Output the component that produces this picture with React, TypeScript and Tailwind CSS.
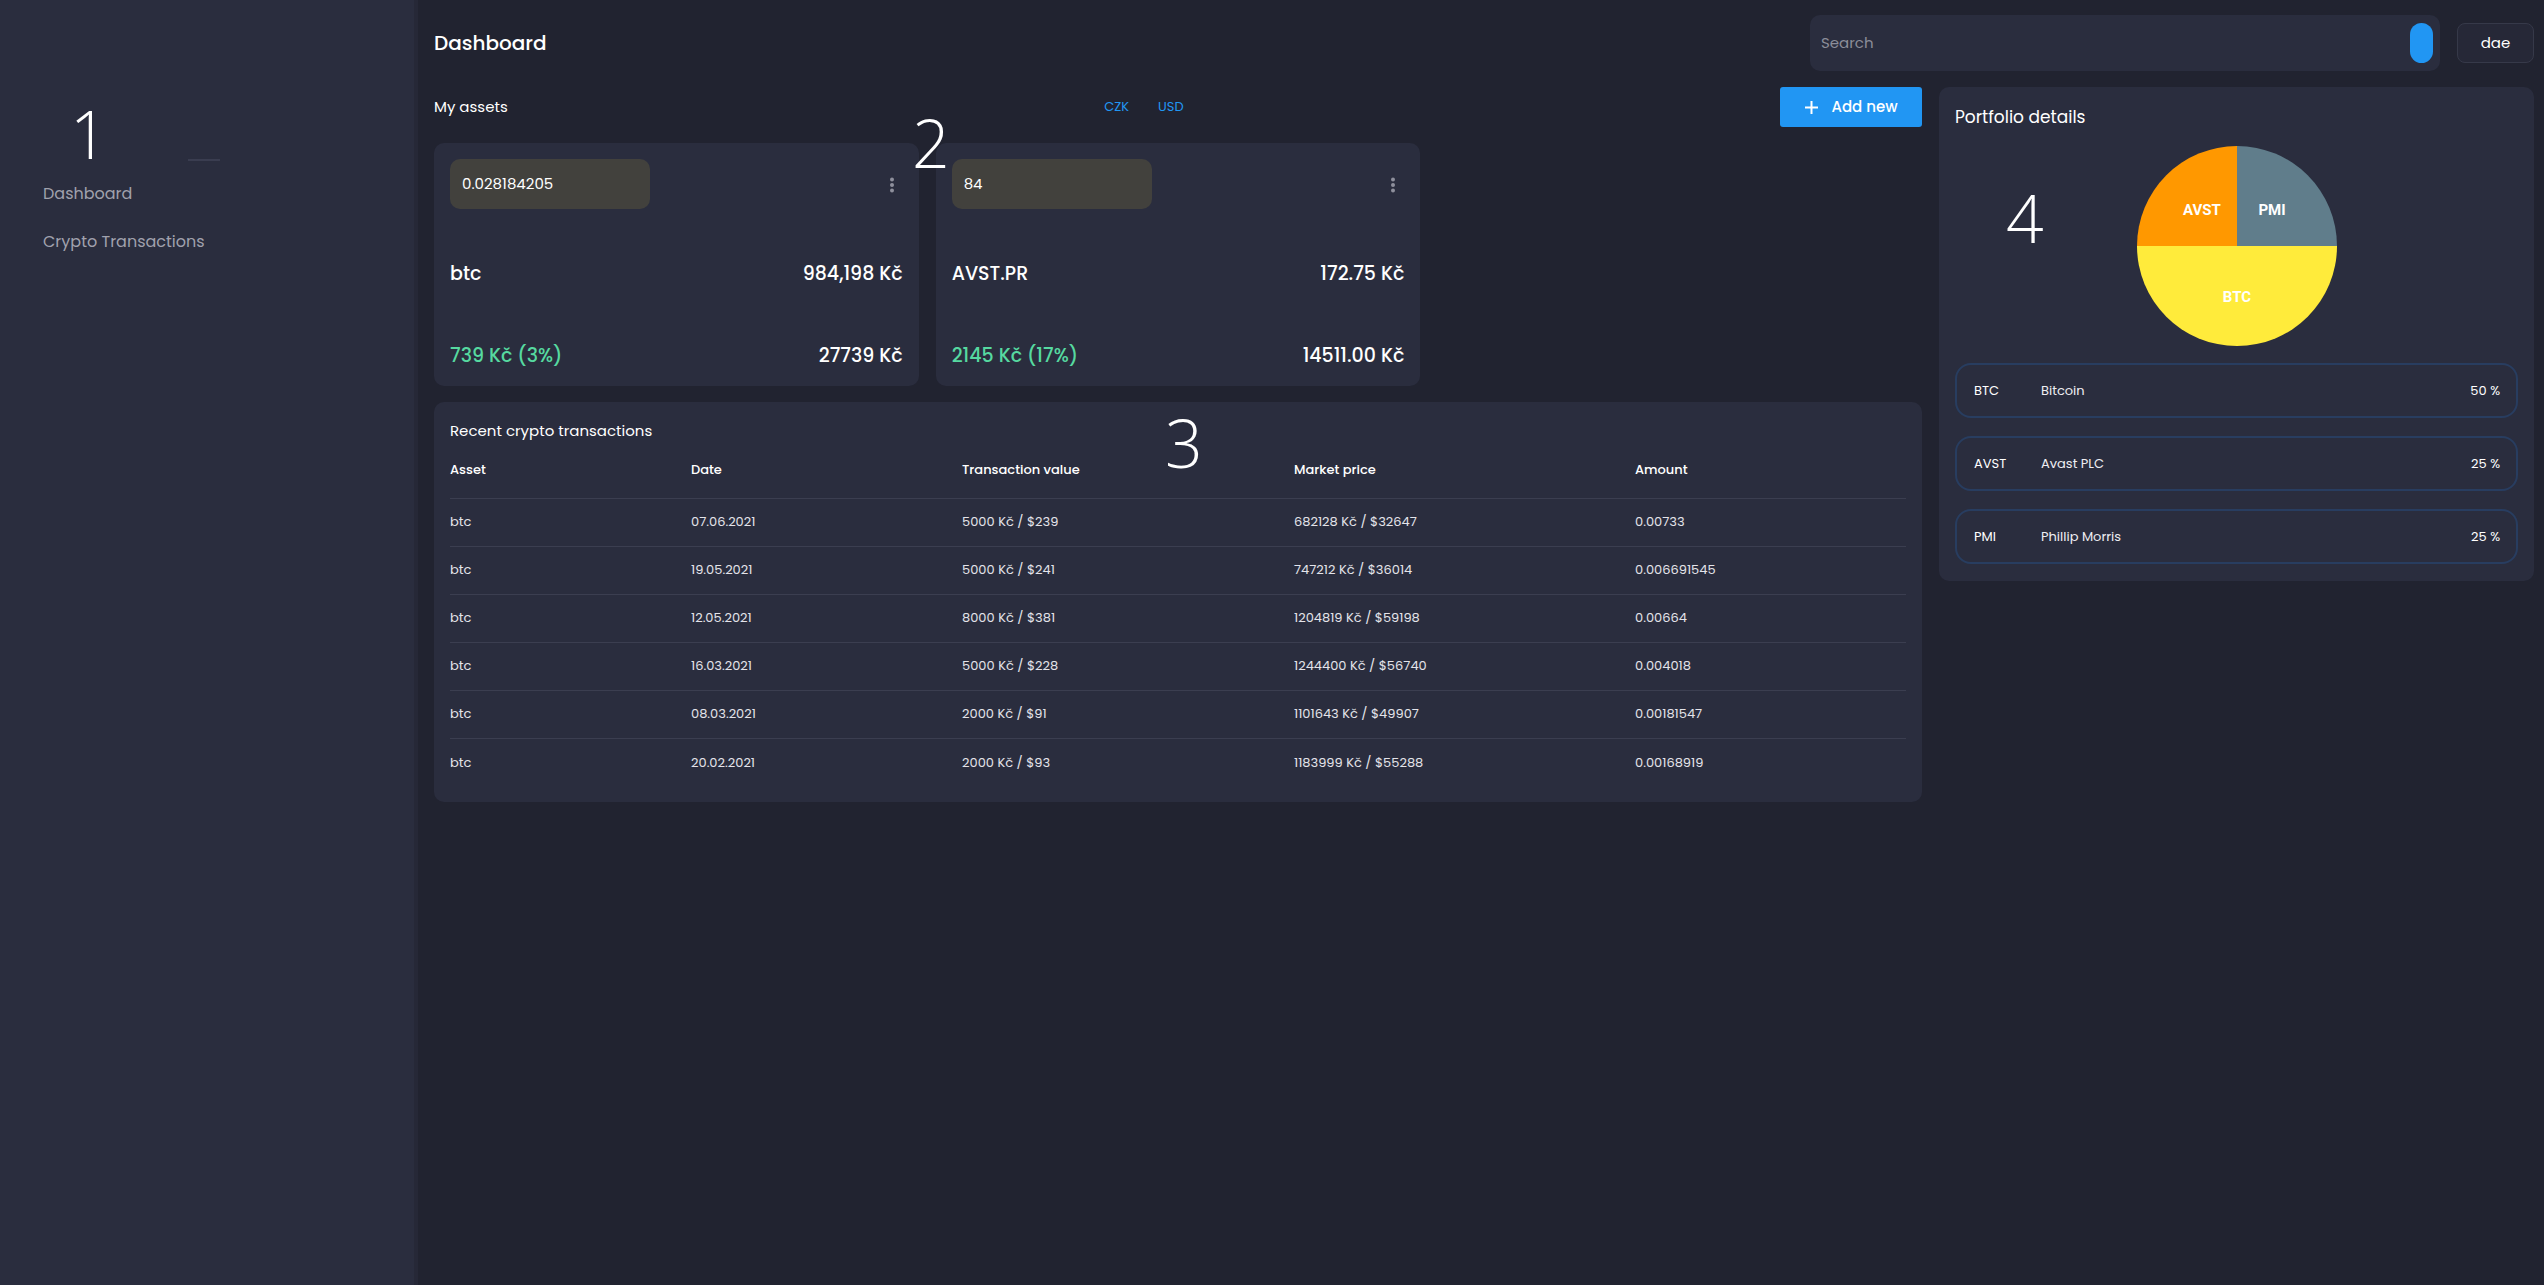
import React from "react";

const transactions = [
  { asset: "btc", date: "07.06.2021", value: "5000 Kč / $239", market: "682128 Kč / $32647", amount: "0.00733" },
  { asset: "btc", date: "19.05.2021", value: "5000 Kč / $241", market: "747212 Kč / $36014", amount: "0.006691545" },
  { asset: "btc", date: "12.05.2021", value: "8000 Kč / $381", market: "1204819 Kč / $59198", amount: "0.00664" },
  { asset: "btc", date: "16.03.2021", value: "5000 Kč / $228", market: "1244400 Kč / $56740", amount: "0.004018" },
  { asset: "btc", date: "08.03.2021", value: "2000 Kč / $91", market: "1101643 Kč / $49907", amount: "0.00181547" },
  { asset: "btc", date: "20.02.2021", value: "2000 Kč / $93", market: "1183999 Kč / $55288", amount: "0.00168919" },
];

const assets = [
  { amount: "0.028184205", name: "btc", price: "984,198 Kč", gain: "739 Kč (3%)", total: "27739 Kč" },
  { amount: "84", name: "AVST.PR", price: "172.75 Kč", gain: "2145 Kč (17%)", total: "14511.00 Kč" },
];

const holdings = [
  { ticker: "BTC", name: "Bitcoin", share: "50 %" },
  { ticker: "AVST", name: "Avast PLC", share: "25 %" },
  { ticker: "PMI", name: "Phillip Morris", share: "25 %" },
];

function Kebab() {
  return (
    <svg width="6" height="16" viewBox="0 0 6 16" className="mt-[18px] mr-[8px]">
      <circle cx="3" cy="2.5" r="2" fill="#8e8f9c" />
      <circle cx="3" cy="8" r="2" fill="#8e8f9c" />
      <circle cx="3" cy="13.5" r="2" fill="#8e8f9c" />
    </svg>
  );
}

function AssetCard({ a }: { a: (typeof assets)[number] }) {
  return (
    <div className="flex h-[243px] flex-col rounded-[10px] bg-[#2a2d3e] px-4 pt-4">
      <div className="flex items-start justify-between">
        <div className="flex h-[50px] w-[200px] items-center rounded-[10px] bg-[#42413d] pl-3 text-[15px] text-white">
          {a.amount}
        </div>
        <Kebab />
      </div>
      <div className="mt-[51px] flex items-center justify-between text-[19px] font-medium leading-[28px] text-white">
        <span>{a.name}</span>
        <span>{a.price}</span>
      </div>
      <div className="mt-[54px] flex items-center justify-between text-[19px] font-medium leading-[28px]">
        <span className="text-[#56d9a0]">{a.gain}</span>
        <span className="text-white">{a.total}</span>
      </div>
    </div>
  );
}

function Pie() {
  return (
    <svg width="200" height="200" viewBox="0 0 200 200" className="mx-auto block">
      <path d="M100,100 L0,100 A100,100 0 0 0 200,100 Z" fill="#ffeb3b" />
      <path d="M100,100 L0,100 A100,100 0 0 1 100,0 Z" fill="#ff9800" />
      <path d="M100,100 L100,0 A100,100 0 0 1 200,100 Z" fill="#607d8b" />
      <g fill="#ffffff" fontFamily="Roboto, sans-serif" fontWeight="700" fontSize="15" textAnchor="middle">
        <text x="65" y="69">AVST</text>
        <text x="135" y="69">PMI</text>
        <text x="100" y="156">BTC</text>
      </g>
    </svg>
  );
}

export default function App() {
  return (
    <div className="relative flex min-h-[1285px] w-full bg-[#212330] font-['Poppins','Open_Sans',sans-serif] text-white">
      {/* annotation numerals */}
      <span className="pointer-events-none absolute left-[70px] top-[100px] font-['Open_Sans',sans-serif] text-[66px] font-light leading-none text-white">1</span>
      <span className="pointer-events-none absolute left-[912px] top-[109px] font-['Open_Sans',sans-serif] text-[66px] font-light leading-none text-white">2</span>
      <span className="pointer-events-none absolute left-[1165px] top-[409px] font-['Open_Sans',sans-serif] text-[66px] font-light leading-none text-white">3</span>
      <span className="pointer-events-none absolute left-[2006px] top-[184px] font-['Open_Sans',sans-serif] text-[66px] font-light leading-none text-white">4</span>

      <aside className="w-[418px] shrink-0 border-r-4 border-[#262837] bg-[#2a2d3e]">
        <div className="ml-[188px] mt-[159px] h-[2px] w-[32px] bg-[#3a3d50]" />
        <nav className="mt-[20px] flex flex-col gap-[22px] pl-[43px] text-[16px] text-[#a0a1ad]">
          <span className="leading-[26px]">Dashboard</span>
          <span className="leading-[26px]">Crypto Transactions</span>
        </nav>
      </aside>

      <main className="flex-1 pl-4 pr-[10px]">
        <header className="mt-[15px] flex h-[56px] items-center">
          <h1 className="flex-1 text-[20px] font-medium">Dashboard</h1>
          <div className="flex h-[56px] w-[630px] items-center justify-between rounded-[10px] bg-[#2a2d3e] pl-[11px] pr-[7px]">
            <span className="text-[15px] text-[#8c8d99]">Search</span>
            <span className="h-[40px] w-[23px] rounded-full bg-[#2196f3]" />
          </div>
          <button className="ml-[17px] h-[40px] w-[77px] rounded-[8px] border border-[#363949] bg-[#262837] text-[15px] text-white">
            dae
          </button>
        </header>

        <div className="mt-[16px] flex gap-[17px]">
          <section className="flex-1">
            <div className="flex h-[40px] items-center justify-between">
              <span className="text-[15px] text-white">My assets</span>
              <div className="flex gap-[29px] text-[13px] text-[#2196f3]">
                <span>CZK</span>
                <span>USD</span>
              </div>
              <button className="flex h-[40px] w-[142px] items-center justify-center gap-[12px] rounded-[3px] bg-[#2196f3] text-[15px] font-medium text-white">
                <svg width="15" height="15" viewBox="0 0 15 15">
                  <path d="M7.5 1v13M1 7.5h13" stroke="#fff" strokeWidth="2" />
                </svg>
                Add new
              </button>
            </div>

            <div className="mt-4 grid grid-cols-3 gap-[17px]">
              {assets.map((a) => (
                <AssetCard key={a.name} a={a} />
              ))}
            </div>

            <div className="mt-4 rounded-[10px] bg-[#2a2d3e] px-4 pb-4 pt-[18px]">
              <div className="text-[15px] leading-[22px] text-white">Recent crypto transactions</div>
              <table className="w-full table-fixed text-left text-[13px]">
                <colgroup>
                  <col className="w-[241px]" />
                  <col className="w-[271px]" />
                  <col className="w-[332px]" />
                  <col className="w-[341px]" />
                  <col />
                </colgroup>
                <thead>
                  <tr className="h-[56px] border-b border-[#3b3e50]">
                    <th className="font-medium">Asset</th>
                    <th className="font-medium">Date</th>
                    <th className="font-medium">Transaction value</th>
                    <th className="font-medium">Market price</th>
                    <th className="font-medium">Amount</th>
                  </tr>
                </thead>
                <tbody className="text-[#e4e4ea]">
                  {transactions.map((t, i) => (
                    <tr key={t.date} className={i < transactions.length - 1 ? "h-[48px] border-b border-[#3b3e50]" : "h-[48px]"}>
                      <td>{t.asset}</td>
                      <td>{t.date}</td>
                      <td>{t.value}</td>
                      <td>{t.market}</td>
                      <td>{t.amount}</td>
                    </tr>
                  ))}
                </tbody>
              </table>
            </div>
          </section>

          <aside className="h-[494px] w-[595px] rounded-[10px] bg-[#2a2d3e] px-4 pt-[18px]">
            <div className="text-[17px] leading-[24px] text-white">Portfolio details</div>
            <div className="mt-[17px]">
              <Pie />
            </div>
            <div className="mt-[17px] flex flex-col gap-[18px]">
              {holdings.map((h) => (
                <div
                  key={h.ticker}
                  className="flex h-[55px] items-center rounded-2xl border-2 border-[#283d60] pl-[17px] pr-[16px] text-[13px] text-white"
                >
                  <span className="w-[67px] pt-[1px]">{h.ticker}</span>
                  <span className="flex-1 text-[#eeeef2]">{h.name}</span>
                  <span>{h.share}</span>
                </div>
              ))}
            </div>
          </aside>
        </div>
      </main>
    </div>
  );
}
